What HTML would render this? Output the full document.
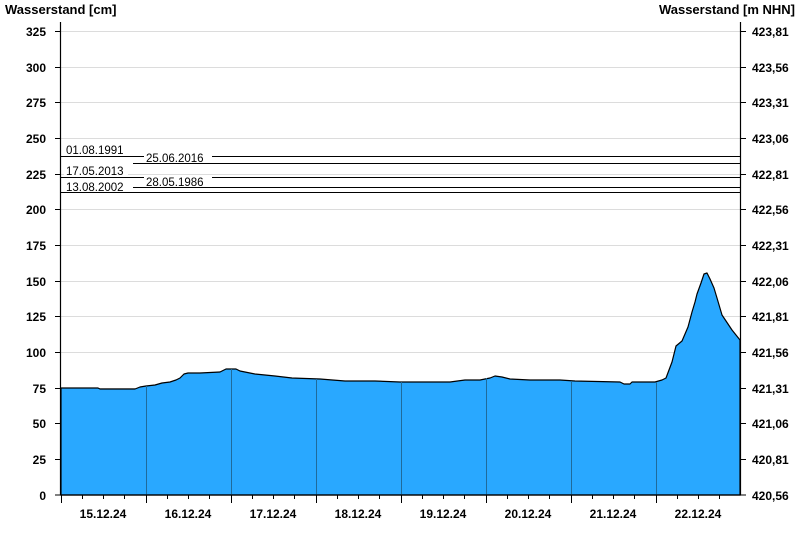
<!DOCTYPE html>
<html><head><meta charset="utf-8"><style>
body{margin:0;background:#fff;width:800px;height:550px;overflow:hidden}
svg text{font-family:"Liberation Sans",Arial,sans-serif}
</style></head><body>
<svg width="800" height="550" viewBox="0 0 800 550" xmlns="http://www.w3.org/2000/svg">
<g font-size="13" font-weight="bold" fill="#000">
<text x="5" y="14">Wasserstand [cm]</text>
<text x="795" y="14" text-anchor="end">Wasserstand [m NHN]</text>
</g>
<g stroke="#dcdcdc" stroke-width="1">
<line x1="61" x2="740" y1="31.5" y2="31.5"/><line x1="61" x2="740" y1="67.5" y2="67.5"/>
<line x1="61" x2="740" y1="102.5" y2="102.5"/><line x1="61" x2="740" y1="138.5" y2="138.5"/>
<line x1="61" x2="740" y1="174.5" y2="174.5"/><line x1="61" x2="740" y1="209.5" y2="209.5"/>
<line x1="61" x2="740" y1="245.5" y2="245.5"/><line x1="61" x2="740" y1="281.5" y2="281.5"/>
<line x1="61" x2="740" y1="316.5" y2="316.5"/><line x1="61" x2="740" y1="352.5" y2="352.5"/>
<line x1="61" x2="740" y1="388.5" y2="388.5"/><line x1="61" x2="740" y1="423.5" y2="423.5"/>
<line x1="61" x2="740" y1="459.5" y2="459.5"/>
</g>
<path d="M61,388 L98,388 L100,389 L135,389 L140,387 L146,386 L155,385 L162,383 L170,382 L176,380 L180,378 L184,374 L188,373 L200,373 L220,372 L226,369 L236,369 L240,371 L255,374 L275,376 L292,378 L320,379 L345,381 L375,381 L400,382 L450,382 L465,380 L480,380 L490,378 L495,376 L502,377 L510,379 L530,380 L560,380 L575,381 L620,382 L624,384 L630,384 L632,382 L655,382 L662,380 L666,378 L669,370 L672,362 L676,346 L682,341 L688,327 L692,312 L695,302 L697,294 L701,283 L704,274 L707,273 L710,279 L714,288 L717,298 L722,315 L728,324 L732,330 L736,335 L740,340 L740,495 L61,495 Z" fill="#29a8ff" stroke="#000" stroke-width="1.2" stroke-linejoin="round"/>
<g stroke="#1f6b9b" stroke-width="1">
<line x1="146.5" x2="146.5" y1="386" y2="495"/><line x1="231.5" x2="231.5" y1="369" y2="495"/>
<line x1="316.5" x2="316.5" y1="379" y2="495"/><line x1="401.5" x2="401.5" y1="382" y2="495"/>
<line x1="486.5" x2="486.5" y1="378" y2="495"/><line x1="571.5" x2="571.5" y1="381" y2="495"/>
<line x1="656.5" x2="656.5" y1="382" y2="495"/>
</g>
<g stroke="#000" stroke-width="1">
<line x1="61" x2="740" y1="156.5" y2="156.5"/>
<line x1="133" x2="740" y1="163.5" y2="163.5"/>
<line x1="61" x2="740" y1="177.5" y2="177.5"/>
<line x1="133" x2="740" y1="187.5" y2="187.5"/>
<line x1="61" x2="740" y1="192.5" y2="192.5"/>
</g>
<g font-size="11.5" fill="#000">
<rect x="64" y="144" width="64" height="11" fill="#fff"/><text x="66" y="154">01.08.1991</text>
<rect x="144" y="152" width="68" height="11" fill="#fff"/><text x="146" y="162">25.06.2016</text>
<rect x="64" y="165" width="64" height="11" fill="#fff"/><text x="66" y="175">17.05.2013</text>
<rect x="144" y="176" width="68" height="11" fill="#fff"/><text x="146" y="186">28.05.1986</text>
<rect x="64" y="181" width="64" height="11" fill="#fff"/><text x="66" y="191">13.08.2002</text>
</g>
<g stroke="#000" stroke-width="1.2">
<line x1="60.5" x2="60.5" y1="22" y2="495"/><line x1="740.5" x2="740.5" y1="22" y2="495"/>
<line x1="60" x2="741" y1="495" y2="495"/>
</g>
<g stroke="#000" stroke-width="1">
<path d="M55,31.5H61M55,67.5H61M55,102.5H61M55,138.5H61M55,174.5H61M55,209.5H61M55,245.5H61M55,281.5H61M55,316.5H61M55,352.5H61M55,388.5H61M55,423.5H61M55,459.5H61M55,495H61"/>
<path d="M740,31.5H746M740,67.5H746M740,102.5H746M740,138.5H746M740,174.5H746M740,209.5H746M740,245.5H746M740,281.5H746M740,316.5H746M740,352.5H746M740,388.5H746M740,423.5H746M740,459.5H746M740,495H746"/>
<path d="M61.5,495V503M146.5,495V503M231.5,495V503M316.5,495V503M401.5,495V503M486.5,495V503M571.5,495V503M656.5,495V503"/>
<path d="M82.5,495V499M103.5,495V499M124.5,495V499M167.5,495V499M188.5,495V499M209.5,495V499M252.5,495V499M273.5,495V499M294.5,495V499M337.5,495V499M358.5,495V499M379.5,495V499M422.5,495V499M443.5,495V499M464.5,495V499M507.5,495V499M528.5,495V499M549.5,495V499M592.5,495V499M613.5,495V499M634.5,495V499M677.5,495V499M698.5,495V499M719.5,495V499"/>
</g>
<g font-size="12" font-weight="bold" fill="#000" text-anchor="end">
<text x="46" y="36">325</text><text x="46" y="72">300</text><text x="46" y="107">275</text>
<text x="46" y="143">250</text><text x="46" y="179">225</text><text x="46" y="214">200</text>
<text x="46" y="250">175</text><text x="46" y="286">150</text><text x="46" y="321">125</text>
<text x="46" y="357">100</text><text x="46" y="393">75</text><text x="46" y="428">50</text>
<text x="46" y="464">25</text><text x="46" y="500">0</text>
</g>
<g font-size="12" font-weight="bold" fill="#000">
<text x="752" y="36">423,81</text><text x="752" y="72">423,56</text><text x="752" y="107">423,31</text>
<text x="752" y="143">423,06</text><text x="752" y="179">422,81</text><text x="752" y="214">422,56</text>
<text x="752" y="250">422,31</text><text x="752" y="286">422,06</text><text x="752" y="321">421,81</text>
<text x="752" y="357">421,56</text><text x="752" y="393">421,31</text><text x="752" y="428">421,06</text>
<text x="752" y="464">420,81</text><text x="752" y="500">420,56</text>
</g>
<g font-size="12" font-weight="bold" fill="#000" text-anchor="middle">
<text x="103" y="518">15.12.24</text><text x="188" y="518">16.12.24</text><text x="273" y="518">17.12.24</text>
<text x="358" y="518">18.12.24</text><text x="443" y="518">19.12.24</text><text x="528" y="518">20.12.24</text>
<text x="613" y="518">21.12.24</text><text x="698" y="518">22.12.24</text>
</g>
</svg>
</body></html>
